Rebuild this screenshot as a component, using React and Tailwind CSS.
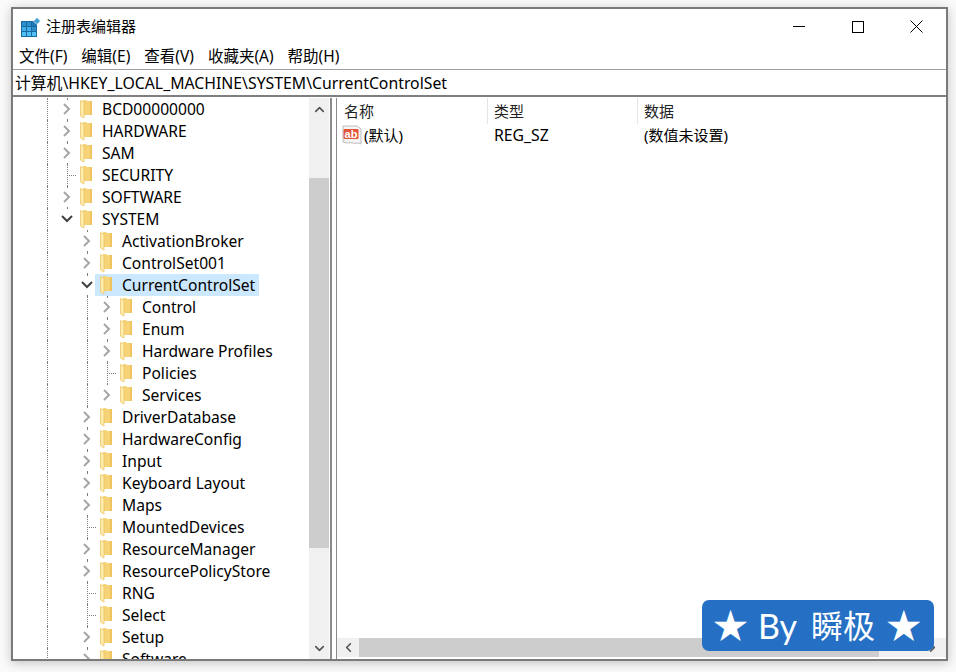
import { ChevronDown, ChevronUp, ChevronLeft, ChevronRight } from "lucide-react";

const FONT = "font-['Noto_Sans','Noto_Sans_CJK_SC',sans-serif]";

const rows = [
  { name: "BCD00000000", level: 0, kind: "closed" },
  { name: "HARDWARE", level: 0, kind: "closed" },
  { name: "SAM", level: 0, kind: "closed" },
  { name: "SECURITY", level: 0, kind: "leaf" },
  { name: "SOFTWARE", level: 0, kind: "closed" },
  { name: "SYSTEM", level: 0, kind: "open", last: true },
  { name: "ActivationBroker", level: 1, kind: "closed" },
  { name: "ControlSet001", level: 1, kind: "closed" },
  { name: "CurrentControlSet", level: 1, kind: "open", selected: true },
  { name: "Control", level: 2, kind: "closed" },
  { name: "Enum", level: 2, kind: "closed" },
  { name: "Hardware Profiles", level: 2, kind: "closed" },
  { name: "Policies", level: 2, kind: "leaf" },
  { name: "Services", level: 2, kind: "closed", last: true },
  { name: "DriverDatabase", level: 1, kind: "closed" },
  { name: "HardwareConfig", level: 1, kind: "closed" },
  { name: "Input", level: 1, kind: "closed" },
  { name: "Keyboard Layout", level: 1, kind: "closed" },
  { name: "Maps", level: 1, kind: "closed" },
  { name: "MountedDevices", level: 1, kind: "leaf" },
  { name: "ResourceManager", level: 1, kind: "closed" },
  { name: "ResourcePolicyStore", level: 1, kind: "closed" },
  { name: "RNG", level: 1, kind: "leaf" },
  { name: "Select", level: 1, kind: "leaf" },
  { name: "Setup", level: 1, kind: "closed" },
  { name: "Software", level: 1, kind: "closed" },
];

function AppIcon() {
  return (
    <svg width="20" height="20" viewBox="0 0 20 20" className="shrink-0">
      <rect x="0" y="4" width="16" height="16" fill="#17699f" />
      <rect x="1" y="5" width="4" height="4" fill="#2b8fce" />
      <rect x="6" y="5" width="4" height="4" fill="#2b8fce" />
      <rect x="11" y="5" width="4" height="4" fill="#1f7cb8" />
      <rect x="1" y="10" width="4" height="4" fill="#3fb0ec" />
      <rect x="6" y="10" width="4" height="4" fill="#3fb0ec" />
      <rect x="11" y="10" width="4" height="4" fill="#2b8fce" />
      <rect x="1" y="15" width="4" height="4" fill="#4fc0f6" />
      <rect x="6" y="15" width="4" height="4" fill="#4fc0f6" />
      <rect x="11" y="15" width="4" height="4" fill="#4fc0f6" />
      <path d="M16 0.500l3.500 3.500-3.500 3.500-3.500-3.500z" fill="#3d9fd6" stroke="#fff" strokeWidth="0.7" />
    </svg>
  );
}

function Folder() {
  return (
    <svg width="12" height="20" viewBox="0 0 12 20" className="shrink-0">
      <path d="M3 1h3l1 1h5v14H3z" fill="#f6d377" />
      <path d="M10 2h2v14h-2z" fill="#efc45f" />
      <path d="M0.500 1.500L4 3.500V19L0.500 17z" fill="#fdecae" stroke="#ecc768" strokeWidth="0.8" />
    </svg>
  );
}

function AbIcon() {
  return (
    <svg width="20" height="20" viewBox="0 0 20 20" className="shrink-0">
      <path d="M1 1h14l4 3v15c-3-2-5 0-8-1s-6 1-10-1z" fill="#f4f4f4" stroke="#bdbdbd" strokeWidth="1" />
      <rect x="1.500" y="4" width="15" height="10" rx="1" fill="#e2553a" />
      <text x="9" y="12.500" textAnchor="middle" fontSize="11" fontWeight="700" fill="#fff" fontFamily="Liberation Sans, sans-serif">ab</text>
    </svg>
  );
}

function Guide({ half }) {
  return <div className={`border-l border-dotted border-[#7d7d7d] w-0 ${half ? "h-[11px]" : "h-full"}`} />;
}

function TreeRow({ row }) {
  const { name, level, kind, selected, last } = row;
  return (
    <div className="flex h-[22px] shrink-0 pl-6">
      <div className="w-5 flex justify-center"><Guide /></div>
      {level >= 1 && <div className="w-5" />}
      {level >= 2 && <div className="w-5 flex justify-center"><Guide /></div>}
      <div className="relative w-5 flex justify-center">
        <Guide half={last} />
        {kind === "leaf" && <div className="absolute left-[10px] top-[11px] w-[9px] border-t border-dotted border-[#7d7d7d]" />}
        {kind === "closed" && (
          <div className="absolute left-[3px] top-[2px] w-[14px] h-[18px] bg-white flex items-center justify-center">
            <svg width="8" height="12" viewBox="0 0 8 12"><path d="M1 1l5 5-5 5" fill="none" stroke="#a6a6a6" strokeWidth="2" /></svg>
          </div>
        )}
        {kind === "open" && (
          <div className="absolute left-[1px] top-[2px] w-[18px] h-[18px] bg-white flex items-center justify-center">
            <svg width="12" height="8" viewBox="0 0 12 8"><path d="M1 1l5 5 5-5" fill="none" stroke="#404040" strokeWidth="2" /></svg>
          </div>
        )}
      </div>
      <div className={`relative flex items-center h-[22px] -ml-[2px] pl-[5px] pr-[4px] ${selected ? "bg-[#cce8ff]" : ""}`}>
        <Folder />
        <span className="ml-[10px] text-[15.600px] leading-[22px] text-black whitespace-nowrap">{name}</span>
      </div>
    </div>
  );
}

export default function App() {
  return (
    <div className={`relative w-[956px] h-[672px] overflow-hidden bg-[#fafafa] pt-[7px] pl-[11px] ${FONT}`}>
      <div className="w-[937px] h-[654px] bg-white border-2 border-[#7a7a7a] flex flex-col shadow-[0_2px_10px_rgba(0,0,0,0.22)]">
        {/* title bar */}
        <div className="h-[35px] shrink-0 flex items-center pl-2">
          <AppIcon />
          <span className="ml-[5px] text-[15px] text-black">注册表编辑器</span>
          <div className="ml-auto flex items-center">
            <div className="w-[59px] flex justify-center">
              <div className="w-3 border-t border-black" />
            </div>
            <div className="w-[59px] flex justify-center">
              <div className="w-3 h-3 border border-black" />
            </div>
            <div className="w-[59px] flex justify-center">
              <svg width="13" height="13" viewBox="0 0 13 13"><path d="M0.500 0.500l12 12M12.500 0.500l-12 12" stroke="#000" fill="none" /></svg>
            </div>
          </div>
        </div>
        {/* menu */}
        <div className="h-[25px] shrink-0 flex items-center pl-[6px] gap-[14px] pt-px text-[15.500px] text-black">
          <span>文件(F)</span>
          <span>编辑(E)</span>
          <span>查看(V)</span>
          <span>收藏夹(A)</span>
          <span>帮助(H)</span>
        </div>
        {/* address bar */}
        <div className="h-[28px] shrink-0 border-t border-[#a0a0a0] border-b-2 border-b-[#7f7f7f] flex items-center pl-[2px] pt-[2px] text-[15.800px] text-black whitespace-nowrap">
          计算机\HKEY_LOCAL_MACHINE\SYSTEM\CurrentControlSet
        </div>
        <div className="flex-1 flex min-h-0 pt-px">
          {/* tree */}
          <div className="w-[319px] shrink-0 flex border-r-2 border-[#8a8a8a]">
            <div className="flex-1 flex flex-col overflow-hidden min-w-0">
              {rows.map((r) => <TreeRow key={r.name} row={r} />)}
            </div>
            <div className="w-5 shrink-0 bg-[#f0f0f0] flex flex-col mr-px">
              <div className="h-[22px] flex items-center justify-center"><ChevronUp size={15} strokeWidth={2.500} className="text-[#505050]" /></div>
              <div className="h-[58px]" />
              <div className="h-[370px] bg-[#cdcdcd]" />
              <div className="flex-1" />
              <div className="h-[22px] flex items-center justify-center"><ChevronDown size={15} strokeWidth={2.500} className="text-[#505050]" /></div>
            </div>
          </div>
          <div className="w-[4px] shrink-0" />
          {/* values */}
          <div className="flex-1 flex flex-col border-l border-[#8a8a8a] min-w-0">
            <div className="h-[26px] shrink-0 flex text-[15px] text-[#222]">
              <div className="w-[151px] pl-[7px] border-r border-[#e5e5e5] leading-[26px]">名称</div>
              <div className="w-[150px] pl-[6px] border-r border-[#e5e5e5] leading-[26px]">类型</div>
              <div className="pl-[6px] leading-[26px]">数据</div>
            </div>
            <div className="h-[22px] shrink-0 flex items-center text-[15px] text-black">
              <div className="w-[151px] flex items-center pl-[5px]">
                <AbIcon />
                <span className="ml-[2px] pt-px">(默认)</span>
              </div>
              <div className="w-[150px] pl-[6px] pt-[2px] text-[15.800px]">REG_SZ</div>
              <div className="pl-[6px] pt-px">(数值未设置)</div>
            </div>
            <div className="flex-1" />
            <div className="h-[19px] shrink-0 mb-[2px] bg-[#f0f0f0] flex items-center">
              <div className="w-[22px] flex justify-center"><ChevronLeft size={15} strokeWidth={2.500} className="text-[#505050]" /></div>
              <div className="w-[520px] h-full bg-[#cdcdcd]" />
              <div className="ml-auto w-[18px] mr-[5px] flex justify-center"><ChevronRight size={15} strokeWidth={2.500} className="text-[#505050]" /></div>
            </div>
          </div>
        </div>
      </div>
      {/* watermark */}
      <div className="absolute left-[702px] top-[600px] w-[232px] h-[51px] rounded-[7px] bg-[#2570c4] text-white flex items-center pl-[11px] text-[32px] font-['Lato','Noto_Sans_CJK_SC',sans-serif] whitespace-nowrap">
        <span className="text-[35px]">★</span>
        <span className="ml-[10px] text-[34px]">By</span>
        <span className="ml-[14px]">瞬极</span>
        <span className="ml-[11px] text-[35px]">★</span>
      </div>
    </div>
  );
}
